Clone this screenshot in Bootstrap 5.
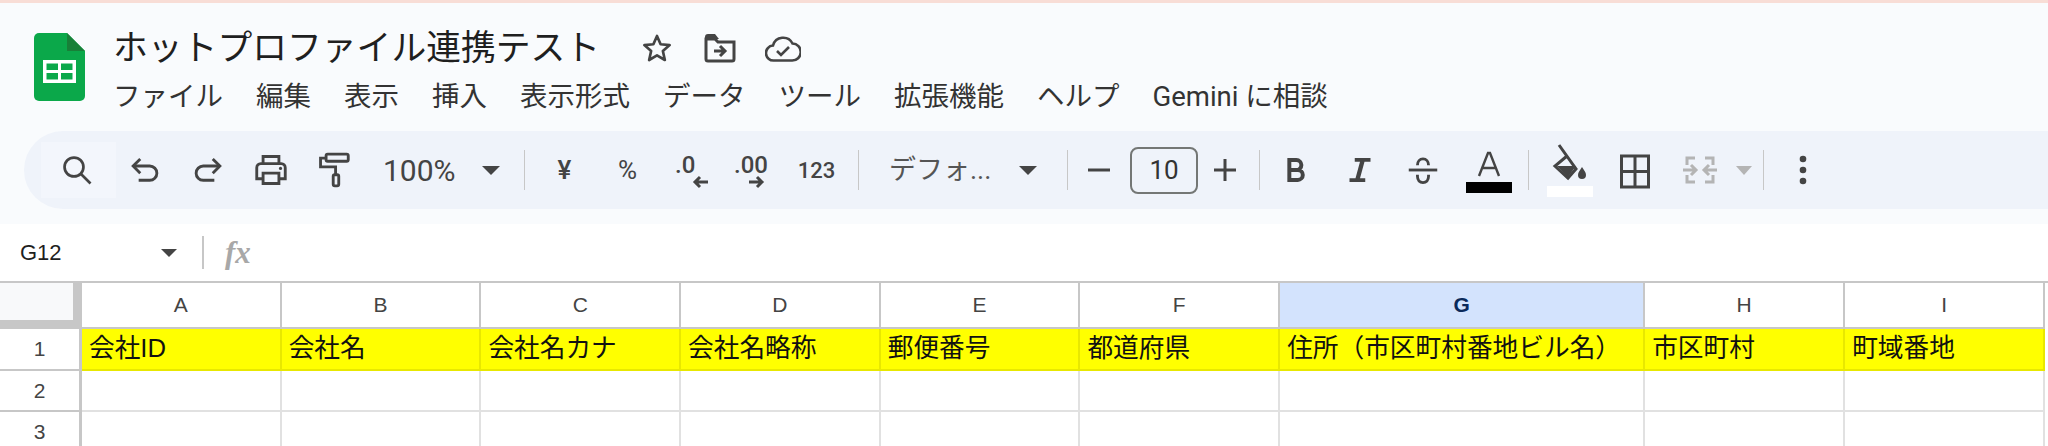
<!DOCTYPE html>
<html lang="ja">
<head>
<meta charset="utf-8">
<title>ホットプロファイル連携テスト</title>
<link href="https://cdn.jsdelivr.net/npm/bootstrap@5.3.0/dist/css/bootstrap.min.css" rel="stylesheet">
<style>
html,body{height:446px;overflow:hidden;background:#fff}
body{font-family:Roboto,"Noto Sans CJK JP",sans-serif;color:#444}
.top-line{height:3px;background:#f8ddd6}
.app-head{height:221px;background:#f9fbfd;padding-top:27px}
.logo-box{width:113px;padding-left:34px;padding-top:3px}
.doc-title{font-size:34.8px;line-height:36px;color:#1f1f1f;height:36px;white-space:nowrap}
.title-wrap{width:487px}
.ico-star{margin-left:41px}
.ico-move{margin-left:31px}
.ico-cloud{margin-left:29px}
.menu-row{margin-top:14px;font-size:27.5px;line-height:34px;color:#333;gap:33px;white-space:nowrap}
.tool-strip{height:78px;margin:17px 0 0 24px;background:#eff3fa;border-radius:39px 0 0 39px;padding-left:17px}
.tg{height:56px;flex:none}
.tg1{width:483px}.tg2{width:333px}.tg3{width:208px;padding-left:30px}.tg4{width:191px}.tg5{width:268px;padding-left:3px}.tg6{width:234px;padding-left:8px}.tg7{width:78px}
.tsep{width:1px;height:40px;background:#c7c7c7;flex:none}
.search-btn{width:75px;height:56px;background:#f3f6fc;margin-right:-3px;padding-right:3px;flex:none}
.tb{width:63px;height:56px;flex:none;font-size:26px;color:#444}
.tb-num{font-size:22px;font-weight:500}
.tb-yen{font-weight:500}
.zoom-txt{font-size:30px;width:100px;margin-left:18px;flex:none}
.caret-dn{width:0;height:0;border-left:9px solid transparent;border-right:9px solid transparent;border-top:9px solid #444;flex:none}
.caret-zoom{margin-left:-1px}
.font-txt{font-size:27px;width:130px;color:#555;flex:none}
.minus-b{width:62px}.plus-b{width:54px}
.size-box{width:68px;height:47px;border:2px solid #747775;border-radius:8px;font-size:26px;color:#333;flex:none}
.nudge-b{position:relative;left:2px}
.nudge-c{position:relative;left:5px}
.wide-b{width:65px}
.caret-off{margin-left:4px;border-top-color:#b4b4b4;border-left-width:8px;border-right-width:8px;border-top-width:9px}
.fx-row{height:57px;background:#fff}
.name-box{width:202px;padding-left:20px;font-size:22px;color:#1f1f1f;font-family:"Liberation Sans",sans-serif;flex:none}
.name-box .caret-dn{margin-left:99px;border-left-width:8px;border-right-width:8px;border-top-width:8px}
.fx-sep{width:2px;height:33px;background:#c7c7c7;flex:none}
.fx-mark{margin-left:21px;font-family:"Liberation Serif",serif;font-style:italic;font-weight:700;font-size:31px;color:#a8a8a8;line-height:1}
.sheet-grid{display:grid;grid-template-columns:82px repeat(6,199.7px) 365px 200px 200px 1fr;grid-template-rows:46px 42px 41px 41px;border-top:2px solid #c7c7c7;font-family:"Liberation Sans","Noto Sans CJK JP",sans-serif}
.corner{background:#f8f9fa;border-right:9px solid #c7c7c7;border-bottom:9px solid #c7c7c7}
.col-h{border-right:2px solid #c7c7c7;border-bottom:2px solid #c7c7c7;font-size:21px;color:#444}
.col-on{background:#d3e3fd;color:#0b2a5b;font-weight:700}
.row-h{border-right:3px solid #c7c7c7;border-bottom:2px solid #c7c7c7;font-size:21px;color:#444}
.cell-y{background:#ff0;border-right:2px solid #e8e800;border-bottom:2px solid #e8e800;font-size:25.7px;line-height:1;color:#111;padding-left:7px;white-space:nowrap;overflow:hidden}
.cell-e{border-right:2px solid #e1e1e1;border-bottom:2px solid #e1e1e1}
.end-c{border:0}
svg{display:block}
</style>
</head>
<body>
<div class="top-line"></div>
<header class="app-head">
  <div class="d-flex">
    <div class="logo-box flex-shrink-0">
      <svg width="51" height="68" viewBox="0 0 51 68"><path d="M5 0H33L51 18V63a5 5 0 0 1-5 5H5a5 5 0 0 1-5-5V5a5 5 0 0 1 5-5Z" fill="#0ba84a"/><path d="M33 0L51 18H33Z" fill="#188038"/><path d="M9 27H42V50H9ZM12.500 30.500V37H24V30.500ZM27 30.500V37H38.500V30.500ZM12.500 40V46.500H24V40ZM27 40V46.500H38.500V40Z" fill="#fff" fill-rule="evenodd"/></svg>
    </div>
    <div>
      <div class="d-flex align-items-center">
        <div class="doc-title title-wrap">ホットプロファイル連携テスト</div>
        <svg class="ico-star" width="32" height="32" viewBox="0 0 24 24" fill="none" stroke="#444" stroke-width="2" stroke-linejoin="round"><path d="M12 3l2.700 6.200 6.800.600-5.100 4.500 1.500 6.700L12 17.500 6.100 21l1.500-6.700L2.500 9.800l6.800-.600Z"/></svg>
        <svg class="ico-move" width="32" height="30" viewBox="0 0 32 30" fill="none"><path d="M2 6V26a2 2 0 0 0 2 2H28a2 2 0 0 0 2-2V9H14L11 6Z" stroke="#444" stroke-width="3"/><path d="M1 4a3 3 0 0 1 3-3h7l4 5H1Z" fill="#444"/><path d="M10 18H20M16 13l5 5-5 5" stroke="#444" stroke-width="3"/></svg>
        <svg class="ico-cloud" width="36" height="30" viewBox="0 0 36 30" fill="none" stroke="#444" stroke-width="2.600"><path d="M9 27.500a7.500 7.500 0 0 1-1-15A10.500 10.500 0 0 1 27.500 10.500 8.500 8.500 0 0 1 27 27.500Z"/><path d="M12 18l4 4 8-8"/></svg>
      </div>
      <nav class="menu-row d-flex">
        <span>ファイル</span><span>編集</span><span>表示</span><span>挿入</span><span>表示形式</span><span>データ</span><span>ツール</span><span>拡張機能</span><span>ヘルプ</span><span>Gemini に相談</span>
      </nav>
    </div>
  </div>
  <div class="tool-strip d-flex align-items-center">
    <div class="tg tg1 d-flex align-items-center">
      <div class="search-btn d-flex align-items-center justify-content-center">
        <svg width="36" height="36" viewBox="0 0 24 24" fill="none" stroke="#444" stroke-width="1.800"><circle cx="10" cy="10" r="6.300"/><path d="M14.500 14.500L21 21"/></svg>
      </div>
      <div class="tb d-flex align-items-center justify-content-center">
        <svg width="38" height="38" viewBox="0 0 24 24" fill="none" stroke="#444" stroke-width="1.800"><path d="M9 5L4.500 9.500 9 14"/><path d="M5 9.500H15a4.500 4.500 0 0 1 0 9H8"/></svg>
      </div>
      <div class="tb d-flex align-items-center justify-content-center">
        <svg width="38" height="38" viewBox="0 0 24 24" fill="none" stroke="#444" stroke-width="1.800"><path d="M15 5L19.500 9.500 15 14"/><path d="M19 9.500H9a4.500 4.500 0 0 0 0 9H16"/></svg>
      </div>
      <div class="tb d-flex align-items-center justify-content-center">
        <svg width="38" height="38" viewBox="0 0 24 24" fill="none" stroke="#444" stroke-width="1.800"><path d="M7 8V3.500H17V8"/><path d="M7 17.500H3V10.500a2.500 2.500 0 0 1 2.500-2.500h13a2.500 2.500 0 0 1 2.500 2.500V17.500H17"/><path d="M7 14H17V20.500H7Z"/><circle cx="18" cy="11" r="1" fill="#444" stroke="none"/></svg>
      </div>
      <div class="tb d-flex align-items-center justify-content-center">
        <svg width="38" height="38" viewBox="0 0 24 24" fill="none" stroke="#444" stroke-width="1.800"><rect x="7" y="2" width="14" height="4.500" rx="1"/><path d="M7 4.500H3.500V10H13V15"/><rect x="11.500" y="15" width="3.500" height="7" rx="1"/></svg>
      </div>
      <div class="zoom-txt">100%</div>
      <div class="caret-dn caret-zoom"></div>
    </div>
    <div class="tsep"></div>
    <div class="tg tg2 d-flex align-items-center ps-2">
      <div class="tb tb-yen d-flex align-items-center justify-content-center">¥</div>
      <div class="tb d-flex align-items-center justify-content-center">%</div>
      <div class="tb d-flex align-items-center justify-content-center">
        <svg width="44" height="44" viewBox="0 0 44 44"><text x="6" y="25" font-size="24" font-weight="500" fill="#444" font-family="Roboto">.0</text><path d="M39 34H26M31 29l-5 5 5 5" fill="none" stroke="#444" stroke-width="3"/></svg>
      </div>
      <div class="tb d-flex align-items-center justify-content-center">
        <svg width="44" height="44" viewBox="0 0 44 44"><text x="2" y="25" font-size="24" font-weight="500" fill="#444" font-family="Roboto">.00</text><path d="M17 34H30M25 29l5 5-5 5" fill="none" stroke="#444" stroke-width="3"/></svg>
      </div>
      <div class="tb tb-num d-flex align-items-center justify-content-center">123</div>
    </div>
    <div class="tsep"></div>
    <div class="tg tg3 d-flex align-items-center">
      <div class="font-txt">デフォ...</div>
      <div class="caret-dn"></div>
    </div>
    <div class="tsep"></div>
    <div class="tg tg4 d-flex align-items-center">
      <div class="tb minus-b d-flex align-items-center justify-content-center"><svg width="22" height="4" viewBox="0 0 22 4"><path d="M0 2H22" stroke="#444" stroke-width="3"/></svg></div>
      <div class="size-box d-flex align-items-center justify-content-center">10</div>
      <div class="tb plus-b d-flex align-items-center justify-content-center"><svg width="22" height="22" viewBox="0 0 22 22"><path d="M0 11H22M11 0V22" stroke="#444" stroke-width="3"/></svg></div>
    </div>
    <div class="tsep"></div>
    <div class="tg tg5 d-flex align-items-center">
      <div class="tb d-flex align-items-center justify-content-center">
        <svg width="34" height="34" viewBox="0 0 24 24" fill="none" stroke="#444" stroke-width="2.800"><path d="M8 5H13a3.500 3.500 0 0 1 0 7H8ZM8 12H14a3.500 3.500 0 0 1 0 7H8Z"/></svg>
      </div>
      <div class="tb nudge-b d-flex align-items-center justify-content-center">
        <svg width="36" height="36" viewBox="0 0 24 24" fill="#444"><path d="M8.500 4H19V6.500H15L12 17.500H15.500V20H5V17.500H9L12 6.500H8.500Z"/></svg>
      </div>
      <div class="tb nudge-b d-flex align-items-center justify-content-center">
        <svg width="38" height="38" viewBox="0 0 24 24" fill="none" stroke="#444" stroke-width="1.800"><path d="M3 12H21"/><path d="M8.500 9C8.500 6.500 10 5 12 5s3.500 1.500 3.500 4"/><path d="M8.500 15v1c0 2.500 1.500 4 3.500 4s3.500-1.500 3.500-4v-1"/></svg>
      </div>
      <div class="tb nudge-c d-flex align-items-center justify-content-center">
        <svg width="46" height="46" viewBox="0 0 46 46"><path d="M13 29L22 6h2L33 29M16.500 21H29.500" fill="none" stroke="#444" stroke-width="2.400"/><rect x="0" y="35" width="46" height="11" fill="#000"/></svg>
      </div>
    </div>
    <div class="tsep"></div>
    <div class="tg tg6 d-flex align-items-center">
      <div class="tb wide-b d-flex align-items-center justify-content-center">
        <svg width="46" height="56" viewBox="0 0 46 56"><path d="M12 3L29 27 21 36 8 24 20 14" fill="none" stroke="#444" stroke-width="3"/><path d="M10 24H29L21 35Z" fill="#444"/><path d="M35 25c2 3 4 5.500 4 8a4 4 0 0 1-8 0c0-2.500 2-5 4-8Z" fill="#444"/><rect x="0" y="44" width="46" height="11" fill="#fff"/></svg>
      </div>
      <div class="tb wide-b d-flex align-items-center justify-content-center">
        <svg width="30" height="42" viewBox="0 0 30 42" fill="none" stroke="#444" stroke-width="3"><path d="M1.500 7H28.500V38H1.500ZM15 7V38M1.500 22.500H28.500"/></svg>
      </div>
      <div class="tb wide-b d-flex align-items-center justify-content-center">
        <svg width="34" height="42" viewBox="0 0 34 42" fill="none" stroke="#b4b4b4" stroke-width="3"><path d="M12 9H4V16M22 9H30V16M12 33H4V26M22 33H30V26"/><path d="M0 21H13M8 16l5 5-5 5M34 21H21M26 16l-5 5 5 5"/></svg>
      </div>
      <div class="caret-dn caret-off"></div>
    </div>
    <div class="tsep"></div>
    <div class="tg tg7 d-flex align-items-center justify-content-center">
      <svg width="10" height="32" viewBox="0 0 10 32" fill="#444"><circle cx="5" cy="5" r="3.300"/><circle cx="5" cy="16" r="3.300"/><circle cx="5" cy="27" r="3.300"/></svg>
    </div>
  </div>
</header>
<section class="fx-row d-flex align-items-center">
  <div class="name-box d-flex align-items-center"><span>G12</span><div class="caret-dn"></div></div>
  <div class="fx-sep"></div>
  <div class="fx-mark">fx</div>
</section>
<section class="sheet-grid">
  <div class="corner"></div>
  <div class="col-h d-flex align-items-center justify-content-center">A</div>
  <div class="col-h d-flex align-items-center justify-content-center">B</div>
  <div class="col-h d-flex align-items-center justify-content-center">C</div>
  <div class="col-h d-flex align-items-center justify-content-center">D</div>
  <div class="col-h d-flex align-items-center justify-content-center">E</div>
  <div class="col-h d-flex align-items-center justify-content-center">F</div>
  <div class="col-h col-on d-flex align-items-center justify-content-center">G</div>
  <div class="col-h d-flex align-items-center justify-content-center">H</div>
  <div class="col-h d-flex align-items-center justify-content-center">I</div>
  <div class="end-c"></div>

  <div class="row-h d-flex align-items-center justify-content-center">1</div>
  <div class="cell-y d-flex align-items-center">会社ID</div>
  <div class="cell-y d-flex align-items-center">会社名</div>
  <div class="cell-y d-flex align-items-center">会社名カナ</div>
  <div class="cell-y d-flex align-items-center">会社名略称</div>
  <div class="cell-y d-flex align-items-center">郵便番号</div>
  <div class="cell-y d-flex align-items-center">都道府県</div>
  <div class="cell-y d-flex align-items-center">住所（市区町村番地ビル名）</div>
  <div class="cell-y d-flex align-items-center">市区町村</div>
  <div class="cell-y d-flex align-items-center">町域番地</div>
  <div class="end-c"></div>

  <div class="row-h d-flex align-items-center justify-content-center">2</div>
  <div class="cell-e"></div><div class="cell-e"></div><div class="cell-e"></div><div class="cell-e"></div><div class="cell-e"></div><div class="cell-e"></div><div class="cell-e"></div><div class="cell-e"></div><div class="cell-e"></div><div class="end-c"></div>

  <div class="row-h d-flex align-items-center justify-content-center">3</div>
  <div class="cell-e"></div><div class="cell-e"></div><div class="cell-e"></div><div class="cell-e"></div><div class="cell-e"></div><div class="cell-e"></div><div class="cell-e"></div><div class="cell-e"></div><div class="cell-e"></div><div class="end-c"></div>
</section>
<script src="https://cdn.jsdelivr.net/npm/bootstrap@5.3.0/dist/js/bootstrap.bundle.min.js"></script>
</body>
</html>
